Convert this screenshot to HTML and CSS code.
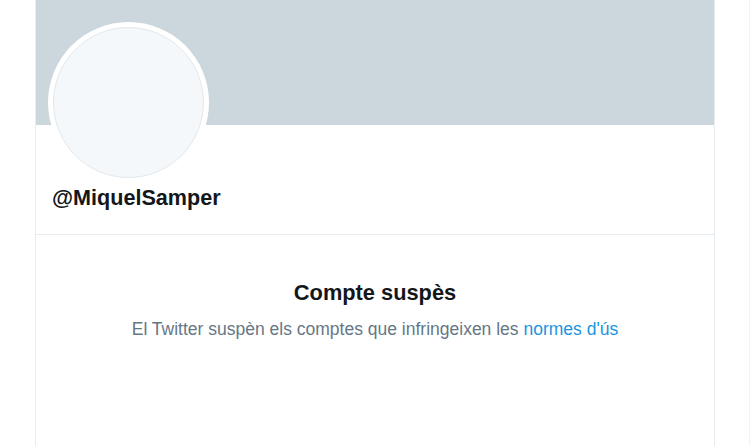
FILE: index.html
```html
<!DOCTYPE html>
<html lang="ca">
<head>
<meta charset="utf-8">
<title>@MiquelSamper</title>
<link rel="stylesheet" href="styles.css">
</head>
<body>
<div class="page">
  <main class="column">
    <div class="banner"></div>
    <section class="profile">
      <div class="avatar"><div class="avatar-inner"></div></div>
      <h1 class="handle">@MiquelSamper</h1>
    </section>
    <section class="suspended">
      <h2 class="title">Compte suspès</h2>
      <p class="desc">El Twitter suspèn els comptes que infringeixen les <a class="link" href="#">normes d'ús</a></p>
    </section>
  </main>
  <div class="side"></div>
</div>
</body>
</html>
```
FILE: styles.css
```css
html, body {
  margin: 0;
  padding: 0;
  background: #ffffff;
  font-family: "Liberation Sans", Arial, sans-serif;
}
.page {
  display: flex;
  height: 446px;
  overflow: hidden;
}
.column {
  margin-left: 35px;
  width: 678px;
  border-left: 1px solid #e6ecf0;
  border-right: 1px solid #e6ecf0;
  display: flex;
  flex-direction: column;
}
.side {
  margin-left: 34px;
  width: 1px;
  background: #f0f2f4;
}
.banner {
  height: 125px;
  background: #ccd6dd;
}
.profile {
  padding: 0 16px;
  border-bottom: 1px solid #e6ecf0;
  height: 109px;
}
.avatar {
  width: 161px;
  height: 161px;
  margin-top: -103px;
  margin-left: -4px;
  border-radius: 50%;
  background: #ffffff;
  display: flex;
  align-items: center;
  justify-content: center;
}
.avatar-inner {
  width: 151px;
  height: 151px;
  border-radius: 50%;
  background: #f5f8fa;
  border: 1px solid #e1e8ed;
  box-sizing: border-box;
}
.handle {
  margin: 2px 0 0 0;
  font-size: 21.6px;
  font-weight: bold;
  color: #14171a;
  line-height: 26px;
}
.suspended {
  display: flex;
  flex-direction: column;
  align-items: center;
  padding-top: 45px;
}
.title {
  margin: 0;
  font-size: 21.8px;
  font-weight: bold;
  color: #14171a;
  line-height: 26px;
}
.desc {
  margin: 12px 0 0 0;
  font-size: 17.5px;
  color: #657786;
  line-height: 22px;
}
.link {
  color: #1b95e0;
  text-decoration: none;
}
```
